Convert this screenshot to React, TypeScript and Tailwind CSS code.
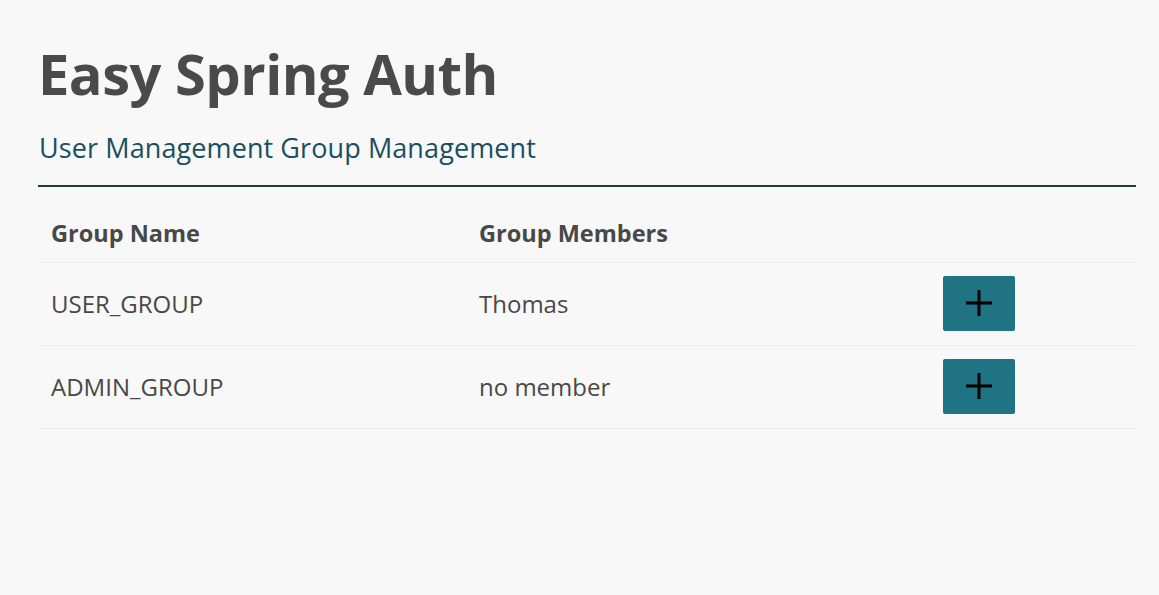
import React from 'react';

interface Group {
  name: string;
  members: string[];
}

const groups: Group[] = [
  { name: 'USER_GROUP', members: ['Thomas'] },
  { name: 'ADMIN_GROUP', members: [] },
];

export default function App() {
  return (
    <div className="min-h-[595px] bg-[#f8f8f8] pl-[38px] pr-[23px] pt-[35px] font-['Open_Sans',sans-serif] text-[#484848]">
      <h1 className="text-[56px] font-bold leading-[76px] tracking-[-0.5px] text-[#4a4a4a]">Easy Spring Auth</h1>

      {/* nav */}
      <nav className="mt-[20px] border-b-2 border-[#1d3b40] pb-[20px] pl-[1px]">
        <div className="flex gap-[7px] text-[27px] leading-[34px] tracking-[0.1px] text-[#1a4f61]">
          <a href="#">User Management</a>
          <a href="#">Group Management</a>
        </div>
      </nav>

      <table className="mt-[17px] w-full border-collapse text-left">
        <thead>
          <tr className="border-b border-[#ececec]">
            <th className="w-[429px] px-[13px] py-[13px] text-[23.5px] font-bold leading-[32px]">Group Name</th>
            <th className="w-[464px] px-[12px] py-[13px] text-[23.5px] font-bold leading-[32px]">Group Members</th>
            <th />
          </tr>
        </thead>
        <tbody>
          {groups.map((g) => (
            <tr key={g.name} className="h-[83px] border-b border-[#ececec]">
              <td className="px-[13px] text-[24px]">{g.name}</td>
              <td className="px-[12px] text-[24px]">
                {g.members.length ? g.members.join(', ') : 'no member'}
              </td>
              <td className="px-[12px]">
                <button className="mb-[2px] flex h-[55px] w-[72px] items-center justify-center rounded-[2px] bg-[#1f7382]">
                  <svg width="28" height="28" viewBox="0 0 28 28" fill="none" stroke="#000" strokeWidth="3">
                    <path d="M14 1v26M1 14h26" />
                  </svg>
                </button>
              </td>
            </tr>
          ))}
        </tbody>
      </table>
    </div>
  );
}
